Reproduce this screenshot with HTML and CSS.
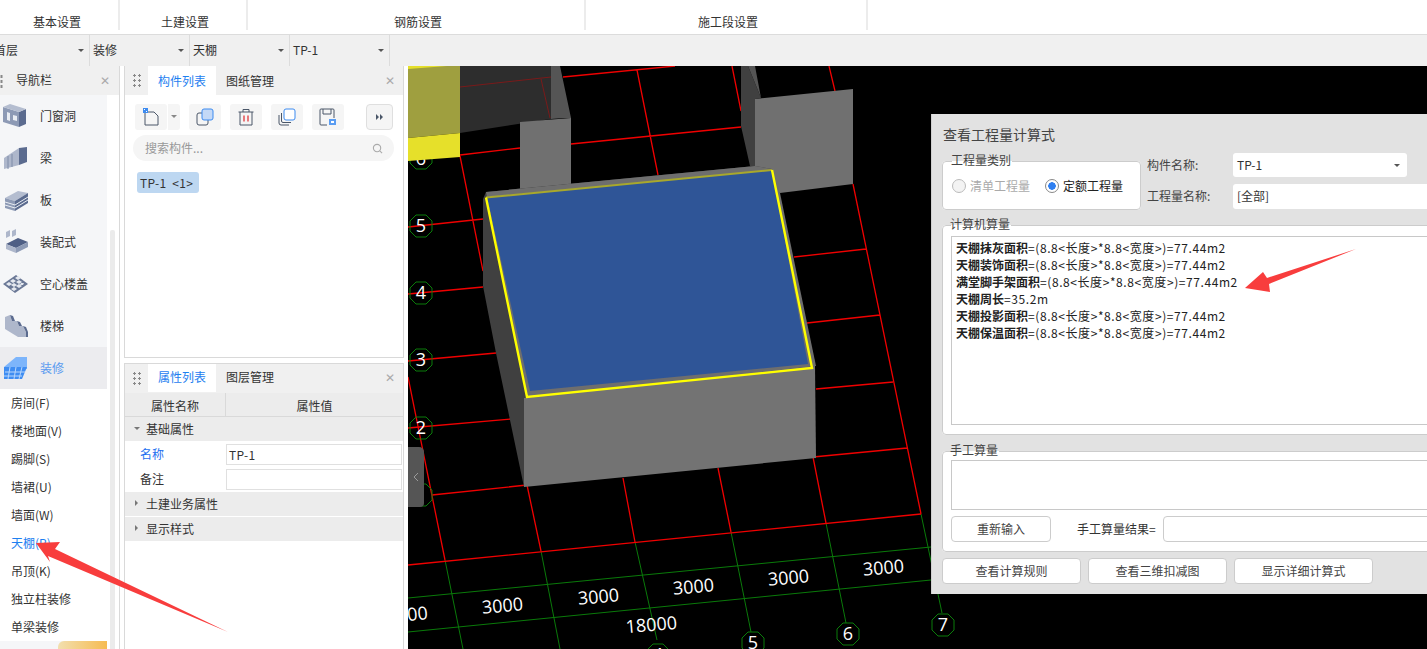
FILE: index.html
```html
<!DOCTYPE html>
<html lang="zh">
<head>
<meta charset="utf-8">
<title>查看工程量计算式</title>
<link rel="stylesheet" href="styles.css">
</head>
<body>
<header class="ribbon">
  <div class="ribbon-group g1">基本设置</div>
  <div class="ribbon-group g2">土建设置</div>
  <div class="ribbon-group g3">钢筋设置</div>
  <div class="ribbon-group g4">施工段设置</div>
</header>
<div class="filterbar">
  <div class="filter f1"><span class="clip">首层</span><i class="caret"></i></div>
  <div class="filter"><span>装修</span><i class="caret"></i></div>
  <div class="filter"><span>天棚</span><i class="caret"></i></div>
  <div class="filter"><span>TP-1</span><i class="caret"></i></div>
</div>
<main class="main">
  <nav class="nav">
    <div class="nav-head"><span class="dots dots-nav"></span><span class="nav-title">导航栏</span><span class="close">✕</span></div>
    <div class="nav-body">
      <div class="nav-list">
        <div class="nav-cat">
          <svg class="cat-icon" viewBox="0 0 26 26"><path d="M1 4l16 5v15L1 19z" fill="#8d9ab5"/><path d="M17 9l7-3v15l-7 3z" fill="#5b6b8f"/><path d="M1 4l7-3 16 5-7 3z" fill="#b4bdd0"/><path d="M5 9l3 1v8l-3-1zM11 12l4 1v5l-4-1z" fill="#e9edf3"/></svg>
          <span>门窗洞</span></div>
        <div class="nav-cat">
          <svg class="cat-icon" viewBox="0 0 26 26"><path d="M2 13L17 3v17L2 24z" fill="#aeb7cb"/><path d="M17 3l8-1v15l-8 3z" fill="#5b6b8f"/><path d="M6 11v13M10 9v13" stroke="#7f8ca8"/></svg>
          <span>梁</span></div>
        <div class="nav-cat">
          <svg class="cat-icon" viewBox="0 0 26 26"><path d="M3 11L16 4l10 2-13 8z" fill="#b4bdd0"/><path d="M3 11l10 3v10L3 21z" fill="#8d9ab5"/><path d="M13 14l13-8v10l-13 8z" fill="#5b6b8f"/><path d="M3 15l10 3 13-8M3 18l10 3 13-8" stroke="#e9edf3" fill="none"/></svg>
          <span>板</span></div>
        <div class="nav-cat">
          <svg class="cat-icon" viewBox="0 0 26 26"><path d="M4 15l12-6 10 4-12 6z" fill="#4f5f85"/><path d="M4 15l10 4v5L4 20z" fill="#aeb7cb"/><path d="M14 19l12-6v5l-12 6z" fill="#8d9ab5"/><path d="M4 3l4-2v6l-4 2zM10 2l4-2v6l-4 2z" fill="#aeb7cb"/></svg>
          <span>装配式</span></div>
        <div class="nav-cat">
          <svg class="cat-icon" viewBox="0 0 26 26"><path d="M1 13L14 4l12 9-13 9z" fill="#6a7896"/><path d="M8 10l3-2 3 2-3 2zM13 7l3-2 3 2-3 2zM4 13l3-2 3 2-3 2zM9 14l3-2 3 2-3 2zM14 11l3-2 3 2-3 2zM19 12l3 0-1 2-3 0zM9 18l3-2 3 2-3 2zM14 15l3-2 3 2-3 2z" fill="#e5e9f0"/></svg>
          <span>空心楼盖</span></div>
        <div class="nav-cat">
          <svg class="cat-icon" viewBox="0 0 26 26"><path d="M3 4l5-2 2 6h5l2 5h4l3 6v5h-8L3 16z" fill="#aeb7cb"/><path d="M8 2l3 1 2 5h-3zM15 8l3 1 2 4h-3zM21 13l3 1 2 5v5h-2v-5z" fill="#5b6b8f"/></svg>
          <span>楼梯</span></div>
        <div class="nav-cat active">
          <svg class="cat-icon" viewBox="0 0 26 26"><path d="M2 12L14 2h11v12l-11 0z" fill="#7db5fb"/><path d="M2 12h23l-5 12H2z" fill="#3f8df2"/><path d="M3 17h20M2 21h18M8 12l-2 12M14 12l-2 12M20 12l-3 12" stroke="#b9d7fc" fill="none"/></svg>
          <span>装修</span></div>
        <div class="nav-sub">房间(F)</div>
        <div class="nav-sub">楼地面(V)</div>
        <div class="nav-sub">踢脚(S)</div>
        <div class="nav-sub">墙裙(U)</div>
        <div class="nav-sub">墙面(W)</div>
        <div class="nav-sub current">天棚(P)</div>
        <div class="nav-sub">吊顶(K)</div>
        <div class="nav-sub">独立柱装修</div>
        <div class="nav-sub">单梁装修</div>
        <div class="nav-foot"><span class="nav-badge"></span></div>
      </div>
      <div class="nav-scroll"><span class="nav-thumb"></span></div>
    </div>
  </nav>

  <section class="panels">
    <div class="panel panel-top">
      <div class="panel-head">
        <span class="dots"></span>
        <span class="tab on">构件列表</span>
        <span class="tab">图纸管理</span>
        <span class="close">✕</span>
      </div>
      <div class="tools">
        <span class="tool tool-new">
          <svg viewBox="0 0 18 18" class="ico"><path d="M3 4h9l4 4v9H3z" fill="none" stroke="#4a5668" stroke-width="1"/><path d="M1 0h5v5H1z" fill="#3d8bf0"/><path d="M2 1h1v1H2zM4 3h1v1H4z" fill="#fff"/></svg>
        </span>
        <span class="tool-more"><i class="caret"></i></span>
        <span class="tool">
          <svg viewBox="0 0 18 18" class="ico"><rect x="1" y="5" width="11" height="12" rx="2" fill="#f5f5f5" stroke="#4a5668"/><rect x="6" y="1" width="11" height="11" rx="2" fill="#c4d9f7" stroke="#3d8bf0"/></svg>
        </span>
        <span class="tool">
          <svg viewBox="0 0 18 18" class="ico"><path d="M1.500 4h15M6 4V1.500h6V4M3 4v13h12V4" fill="none" stroke="#4a5668"/><path d="M7 7.500v6M11 7.500v6" stroke="#e0262b" stroke-width="1.200"/></svg>
        </span>
        <span class="tool">
          <svg viewBox="0 0 18 18" class="ico"><path d="M1 7v8a2 2 0 0 0 2 2h8M3.500 5v8a1.500 1.500 0 0 0 1.500 1.500h8" fill="none" stroke="#4a5668"/><rect x="6" y="1" width="11" height="11" rx="2" fill="#fff" stroke="#3d8bf0"/></svg>
        </span>
        <span class="tool">
          <svg viewBox="0 0 18 18" class="ico"><path d="M8 17H2a1 1 0 0 1-1-1V2a1 1 0 0 1 1-1h12a1 1 0 0 1 1 1v8M4 1v5h8V1" fill="none" stroke="#4a5668"/><rect x="10" y="11" width="7" height="6" fill="#5b9df2"/><rect x="12" y="13" width="3" height="2" fill="#fff"/></svg>
        </span>
        <span class="tool-end"><svg viewBox="0 0 8 6" class="ff"><path d="M0 0l3 3-3 3zM4 0l3 3-3 3z" fill="#4a5668"/></svg></span>
      </div>
      <div class="search"><span>搜索构件...</span>
        <svg viewBox="0 0 12 12" class="search-ico"><circle cx="5.500" cy="5.500" r="4" fill="none" stroke="#aaa" stroke-width="1.200"/><path d="M8.500 8.500l2.500 2.500" stroke="#aaa" stroke-width="1.200"/></svg>
      </div>
      <div class="chip">TP-1 &nbsp;&lt;1&gt;</div>
    </div>
    <div class="panel panel-bottom">
      <div class="panel-head head-short">
        <span class="dots"></span>
        <span class="tab on">属性列表</span>
        <span class="tab">图层管理</span>
        <span class="close">✕</span>
      </div>
      <div class="prop-head"><span class="pc-name">属性名称</span><span class="pc-val">属性值</span></div>
      <div class="prop-group"><i class="tri-down"></i>基础属性</div>
      <div class="prop-row"><span class="prop-key blue">名称</span><span class="prop-input">TP-1</span></div>
      <div class="prop-row"><span class="prop-key">备注</span><span class="prop-input"></span></div>
      <div class="prop-group"><i class="tri-right"></i>土建业务属性</div>
      <div class="prop-group"><i class="tri-right"></i>显示样式</div>
    </div>
  </section>

  <section class="canvas">
    <svg class="scene" viewBox="408 66 1019 583">
      <defs>
        <polygon id="oct" points="11,5 5,11 -5,11 -11,5 -11,-5 -5,-11 5,-11 11,-5" fill="none" stroke="#0b7d0b" stroke-width="1"/>
      </defs>
      <g stroke="#0a7a0a" stroke-width="1" fill="none">
        <path d="M445 560L463 649M541 551L560 649M635 542L657 640M731 532L751 632M826 523L846 623M921 514L942 613"/>
        <path d="M408 598L931 547M408 632L931 580"/>
      </g>
      <g stroke="#f00000" stroke-width="1.300" fill="none">
        <path d="M563 77L675 66M460 155L520 148M571 144L741 127M637 70L658 175M732 66L741 111M829 66L835 91"/>
        <path d="M460 156L483 271M408 227L483 219M408 294L483 287M408 361L496 353"/>
        <path d="M853 184L921 514M794 257L866 249M807 323L880 315M816 389L893 382M813 457L907 448"/>
        <path d="M408 428L511 419M432 495L527 485M408 565L921 514"/>
        <path d="M408 377L445 560M527 485L541 551M623 478L635 542M718 468L731 532M813 457L826 523"/>
      </g>
      <use href="#oct" x="421" y="158"/>
      <text class="axis-num" x="421" y="165">6</text>
      <polygon points="408,66 460,66 460,133 408,138" fill="#9f9f3f"/>
      <polygon points="408,66 447,66 408,69" fill="#e6e02a"/>
      <polygon points="408,138 460,133 460,157 408,161" fill="#e6e02a"/>
      <polygon points="460,66 551,66 551,119 460,133" fill="#2d2d2d"/>
      <path d="M460 87L551 77M541 79L550 118" stroke="#7a1a1a" fill="none"/>
      <polygon points="551,66 560,66 571,118 564,118 551,119" fill="#555"/>
      <polygon points="520,122 571,118 571,184 520,189" fill="#707070"/>
      <polygon points="741,66 748,66 761,98 755,99 755,166 750,166 741,126" fill="#404040"/>
      <polygon points="748,66 755,66 761,98" fill="#555"/>
      <polygon points="755,99 853,89 853,184 780,193 755,170" fill="#707070"/>
      <polygon points="483,199 486,192 755,166 772,169 815,363 815,369 527,398 524,398 524,487 496,353 483,286" fill="#404040"/>
      <polygon points="486,192 755,166 772,169 780,193 816,366 527,398" fill="#6e6e6e"/>
      <polygon points="524,398 815,366 816,458 524,487" fill="#737373"/>
      <polygon points="487,197 772,170 808,364 530,391" fill="#2f5597"/>
      <path d="M486 197.500L772 170" stroke="#a8a82c" stroke-width="2" fill="none"/>
      <path d="M486 197.500L527 397L812 368L772 170" stroke="#ffff00" stroke-width="2.400" fill="none"/>
      <use href="#oct" x="421" y="226"/>
      <use href="#oct" x="421" y="293"/>
      <use href="#oct" x="421" y="360"/>
      <use href="#oct" x="421" y="428"/>
      <use href="#oct" x="421" y="495"/>
      <use href="#oct" x="658" y="655"/>
      <use href="#oct" x="753" y="643"/>
      <use href="#oct" x="848" y="634"/>
      <use href="#oct" x="943" y="625"/>
      <g class="axis">
        <text class="axis-num" x="421" y="232">5</text>
        <text class="axis-num" x="421" y="299">4</text>
        <text class="axis-num" x="421" y="366">3</text>
        <text class="axis-num" x="421" y="434">2</text>
        <text class="axis-num" x="658" y="661">4</text>
        <text class="axis-num" x="753" y="649">5</text>
        <text class="axis-num" x="848" y="640">6</text>
        <text class="axis-num" x="943" y="631">7</text>
      </g>
      <g class="dim">
        <text transform="translate(418 620) rotate(-5)">00</text>
        <text transform="translate(503 612) rotate(-5)">3000</text>
        <text transform="translate(599 603) rotate(-5)">3000</text>
        <text transform="translate(694 593) rotate(-5)">3000</text>
        <text transform="translate(789 584) rotate(-5)">3000</text>
        <text transform="translate(884 574) rotate(-5)">3000</text>
        <text transform="translate(652 631) rotate(-5)">18000</text>
      </g>
    </svg>
    <div class="handle"><svg viewBox="0 0 6 10" class="handle-ico"><path d="M5 1L1 5l4 4" fill="none" stroke="#9a9a9a"/></svg></div>
  </section>
</main>

<aside class="dialog">
  <h2 class="dlg-title">查看工程量计算式</h2>
  <div class="dlg-top">
    <fieldset class="box box-type">
      <legend>工程量类别</legend>
      <span class="radio"></span><span class="radio-label muted">清单工程量</span>
      <span class="radio checked"></span><span class="radio-label">定额工程量</span>
    </fieldset>
    <div class="dlg-fields">
      <div class="field field-a"><span class="field-label">构件名称:</span><span class="field-box short">TP-1<i class="caret"></i></span></div>
      <div class="field"><span class="field-label">工程量名称:</span><span class="field-box">[全部]</span></div>
    </div>
  </div>
  <fieldset class="box box-calc">
    <legend>计算机算量</legend>
    <div class="formula">
      <p><b>天棚抹灰面积</b>=(8.8&lt;长度&gt;*8.8&lt;宽度&gt;)=77.44m2</p>
      <p><b>天棚装饰面积</b>=(8.8&lt;长度&gt;*8.8&lt;宽度&gt;)=77.44m2</p>
      <p><b>满堂脚手架面积</b>=(8.8&lt;长度&gt;*8.8&lt;宽度&gt;)=77.44m2</p>
      <p><b>天棚周长</b>=35.2m</p>
      <p><b>天棚投影面积</b>=(8.8&lt;长度&gt;*8.8&lt;宽度&gt;)=77.44m2</p>
      <p><b>天棚保温面积</b>=(8.8&lt;长度&gt;*8.8&lt;宽度&gt;)=77.44m2</p>
    </div>
  </fieldset>
  <fieldset class="box box-manual">
    <legend>手工算量</legend>
    <div class="manual-area"></div>
    <div class="manual-row">
      <span class="btn btn-reset">重新输入</span>
      <span class="manual-label">手工算量结果=</span>
      <span class="manual-result"></span>
    </div>
  </fieldset>
  <div class="dlg-actions">
    <span class="btn btn-act">查看计算规则</span>
    <span class="btn btn-act">查看三维扣减图</span>
    <span class="btn btn-act">显示详细计算式</span>
  </div>
</aside>

<svg class="arrows" viewBox="0 0 1427 649">
  <polygon points="36,543 60,542 55,549 228,632 48,556 50,562" fill="#f83d3d"/>
  <polygon points="1245,288 1263,272 1267,278 1356,249 1269,284 1270,292" fill="#f83d3d"/>
</svg>
</body>
</html>
```
FILE: styles.css
```css
* { box-sizing: border-box; }
html, body { margin: 0; height: 649px; overflow: hidden; }
body {
  position: relative;
  background: #fff;
  color: #333;
  font: 12px/1.4 "Noto Sans CJK SC", "Noto Sans", sans-serif;
}

.ribbon { display: flex; height: 35px; border-bottom: 1px solid #dcdcdc; }
.ribbon-group {
  height: 30px;
  border-right: 2px solid #ececec;
  text-align: center;
  line-height: 16px;
  padding-top: 14px;
}
.g1 { width: 120px; padding-right: 4px; }
.g2 { width: 128px; padding-left: 4px; }
.g3 { width: 338px; padding-left: 4px; }
.g4 { width: 282px; padding-left: 4px; }

.filterbar {
  display: flex;
  height: 31px;
  background: #f0f0f0;
}
.filter {
  position: relative;
  width: 100px;
  line-height: 29px;
  padding-left: 3px;
  border-right: 1px solid #dcdcdc;
}
.filter.f1 { width: 90px; overflow: hidden; }
.clip { margin-left: -9px; }
.caret {
  display: inline-block;
  width: 0;
  height: 0;
  border: 3px solid transparent;
  border-top: 3px solid #555;
  border-bottom: 0;
}
.filter .caret { position: absolute; right: 5px; top: 14px; }

.main { display: flex; height: 583px; }

.nav { width: 120px; border-right: 1px solid #d9d9d9; flex: none; }
.nav-head {
  display: flex;
  align-items: center;
  height: 29px;
  background: #f0f0f0;
  padding-right: 9px;
}
.nav-title { margin-left: 13px; flex: 1; }
.close { color: #aaa; font-size: 12px; line-height: 1; font-family: "DejaVu Sans", sans-serif; }
.dots {
  width: 6px;
  height: 14px;
  flex: none;
  background: radial-gradient(circle, #888 1.2px, transparent 1.4px) 0 0 / 6px 5px;
  margin-left: 7px;
}
.dots-nav { width: 3px; margin-left: 0; background-position: -1.500px 0; }
.nav-body { display: flex; height: 554px; }
.nav-list { width: 107px; flex: none; overflow: hidden; }
.nav-cat {
  display: flex;
  align-items: center;
  height: 42px;
  background: #f5f6f8;
  padding-left: 2px;
}
.nav-cat span { margin-left: 12px; }
.cat-icon { width: 26px; height: 26px; flex: none; }
.nav-cat.active { background: #ececef; color: #5a9bf0; }
.nav-sub { height: 28px; line-height: 28px; padding-left: 11px; }
.nav-sub.current { color: #1e80f0; }
.nav-foot { display: flex; justify-content: flex-end; height: 20px; background: #f5f6f8; }
.nav-badge { width: 49px; height: 8px; border-radius: 6px 0 0 0; background: linear-gradient(90deg, #f2dfae, #f6bb52); }
.nav-scroll { width: 13px; padding: 135px 4px 0 3px; flex: none; }
.nav-thumb { display: block; width: 5px; height: 420px; background: #ebebeb; border-radius: 2px 2px 0 0; }

.panels {
  width: 280px;
  margin: 0 4px 0 4px;
  flex: none;
  display: flex;
  flex-direction: column;
  gap: 5px;
}
.panel { border: 1px solid #d9d9d9; border-top: 0; background: #fff; }
.panel-top { height: 292px; }
.panel-bottom { flex: 1; border-top: 1px solid #d9d9d9; border-bottom: 0; }
.panel-head {
  display: flex;
  align-items: center;
  height: 29px;
  background: #f0f0f0;
  padding-right: 8px;
}
.tab { width: 68px; height: 29px; line-height: 29px; text-align: center; }
.tab:nth-of-type(3) { margin-right: auto; }
.tab.on { background: #fff; color: #1e80f0; margin-left: 6px; }
.panel-head .dots { margin-left: 7px; width: 10px; height: 15px; background-size: 5px 5px; }
.head-short { height: 29px; padding-bottom: 1px; }
.head-short .tab { line-height: 26px; height: 28px; }

.tools { display: flex; align-items: center; padding: 7px 10px 0 10px; height: 36px; }
.tool {
  display: flex;
  align-items: center;
  justify-content: center;
  width: 32px;
  height: 26px;
  background: #f5f5f5;
  border-radius: 3px;
  margin-right: 9px;
}
.tool-new { margin-right: 1px; }
.tool-more {
  display: flex;
  align-items: center;
  justify-content: center;
  width: 12px;
  height: 26px;
  background: #f5f5f5;
  margin-right: 9px;
  border-radius: 0 3px 3px 0;
}
.tool-more .caret { border-top-color: #888; }
.tool-end {
  display: flex;
  align-items: center;
  justify-content: center;
  width: 27px;
  height: 26px;
  margin-left: auto;
  background: #f5f5f5;
  border: 1px solid #dfdfdf;
  border-radius: 4px;
}
.ico { width: 18px; height: 18px; }
.ff { width: 8px; height: 6px; }
.search {
  display: flex;
  align-items: center;
  justify-content: space-between;
  height: 26px;
  margin: 4px 9px 0 8px;
  padding: 0 11px 0 12px;
  background: #f5f5f5;
  border-radius: 13px;
  color: #999;
}
.search-ico { width: 11px; height: 11px; }
.chip {
  width: 62px;
  height: 21px;
  margin: 11px 0 0 12px;
  padding-left: 3px;
  line-height: 21px;
  background: #bdd7f1;
  border-radius: 3px;
  white-space: nowrap;
  letter-spacing: .3px;
}

.prop-head { display: flex; height: 24px; background: #ececec; border-bottom: 1px solid #d9d9d9; line-height: 25px; text-align: center; }
.pc-name { width: 101px; border-right: 1px solid #d9d9d9; }
.pc-val { flex: 1; }
.prop-group { position: relative; height: 24px; margin-bottom: 1px; line-height: 24px; padding-left: 21px; background: #ececec; }
.tri-down, .tri-right { position: absolute; width: 0; height: 0; border: 3px solid transparent; }
.tri-down { left: 9px; top: 10px; border-top-color: #777; border-bottom: 0; }
.tri-right { left: 10px; top: 8px; border-left-color: #777; border-right: 0; }
.prop-row { display: flex; align-items: center; height: 25px; }
.prop-key { width: 101px; padding-left: 15px; }
.prop-key.blue { color: #1e6ff0; }
.prop-input { width: 176px; height: 21px; line-height: 19px; border: 1px solid #e0e0e0; padding-left: 2px; letter-spacing: .3px; }

.canvas { position: relative; flex: 1; min-width: 0; background: #000; }
.scene { display: block; width: 1019px; height: 583px; }
.axis-num { fill: #fff; font: 18px "Open Sans", sans-serif; text-anchor: middle; }
.dim text { fill: #fff; font: 18px "Open Sans", sans-serif; text-anchor: middle; }
.handle {
  position: absolute;
  left: 0;
  top: 381px;
  width: 16px;
  height: 60px;
  display: flex;
  align-items: center;
  justify-content: center;
  background: #555;
  border-radius: 0 5px 4px 0;
}
.handle-ico { width: 6px; height: 10px; }

.dialog {
  position: absolute;
  left: 931px;
  top: 114px;
  width: 520px;
  height: 480px;
  padding: 0 0 0 10px;
  background: #e2e2e2;
  border-left: 1px solid #d0d0d0;
}
.dlg-title { margin: 10px 0 0 1px; font-size: 14px; font-weight: 400; line-height: 20px; color: #444; }
.box {
  margin: 0;
  padding: 0 8px;
  background: #fff;
  border: 1px solid #ccc;
  border-radius: 4px;
}
.box legend { position: relative; top: -1px; left: -1px; padding: 0; line-height: 14px; color: #444; }
.dlg-top { display: flex; margin-top: 2px; height: 64px; }
.box-type {
  width: 199px;
  height: 56px;
  margin-top: 8px;
  display: flex;
  align-items: center;
  padding: 0 0 5px 9px;
  flex: none;
}
.radio { width: 14px; height: 14px; border: 1px solid #bbb; border-radius: 50%; background: #f3f3f3; flex: none; }
.radio.checked { background: radial-gradient(circle, #2f7ff0 3.500px, #fff 4px); border-color: #888; margin-left: 15px; }
.radio-label { margin-left: 4px; color: #222; white-space: nowrap; }
.radio-label.muted { color: #aaa; }
.dlg-fields { margin-left: 6px; display: flex; flex-direction: column; gap: 7px; padding-top: 7px; flex: 1; }
.field { display: flex; align-items: center; height: 25px; }
.field-a { height: 24px; }
.field-label { width: 86px; color: #444; white-space: nowrap; }
.field-box { position: relative; flex: 1; height: 100%; line-height: 24px; padding-left: 4px; background: #fff; border-radius: 3px; }
.field-box.short { flex: none; width: 174px; }
.field-box .caret { position: absolute; right: 7px; top: 11px; }
.box-calc { width: 520px; height: 217px; margin-top: 8px; }
.formula { height: 189px; padding: 2px 4px; margin-top: 4px; border: 1px solid #c8c8c8; color: #222; letter-spacing: .58px; }
.formula b { letter-spacing: 0; }
.formula p { margin: 0; height: 17px; line-height: 17px; white-space: nowrap; }
.box-manual { width: 520px; height: 108px; margin-top: 9px; }
.manual-area { height: 50px; border: 1px solid #c8c8c8; margin-top: 2px; }
.manual-row { display: flex; align-items: center; margin-top: 6px; }
.btn {
  display: flex;
  align-items: center;
  justify-content: center;
  height: 26px;
  background: #fff;
  border: 1px solid #ccc;
  border-radius: 4px;
  color: #444;
  flex: none;
}
.btn-reset { width: 100px; }
.manual-label { margin-left: 26px; width: 86px; white-space: nowrap; }
.manual-result { flex: 1; height: 26px; border: 1px solid #ccc; border-radius: 4px; }
.dlg-actions { display: flex; gap: 7px; margin-top: 6px; }
.btn-act { width: 139px; }

.arrows { position: absolute; left: 0; top: 0; width: 1427px; height: 649px; pointer-events: none; }
```
